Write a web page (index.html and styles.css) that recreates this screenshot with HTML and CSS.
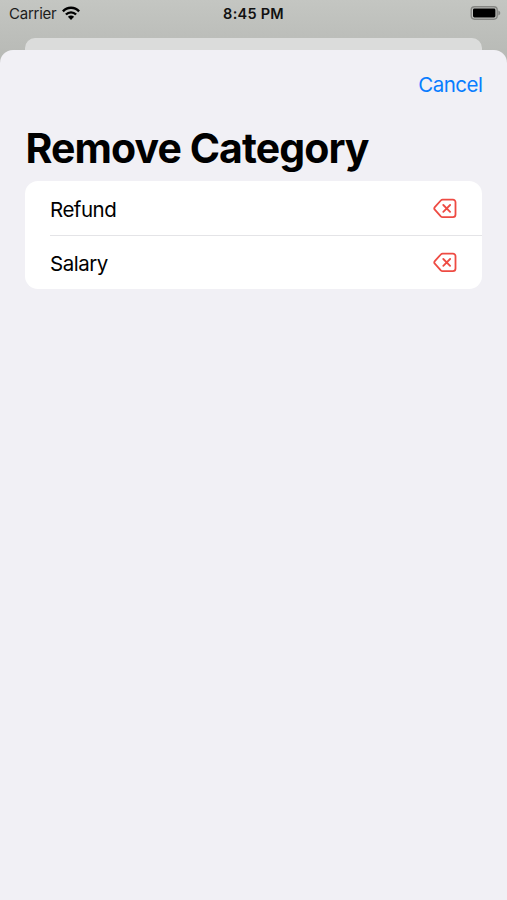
FILE: index.html
```html
<!DOCTYPE html>
<html lang="en">
<head>
<meta charset="utf-8">
<meta name="viewport" content="width=device-width">
<title>Remove Category</title>
<link rel="stylesheet" href="styles.css">
</head>
<body>
<header class="status">
  <div class="carrier"><span class="carrier-name">Carrier</span>
    <svg class="wifi" viewBox="0 0 18 14" width="18" height="14"><path d="M.9 5.300C5.400.6 12.600.6 17.100 5.300M3.900 8.500c2.900-2.900 7.300-2.900 10.200 0" fill="none" stroke="#000" stroke-width="2.400"/><path d="M5.900 10.700c1.800-1.700 4.400-1.700 6.200 0L9 13.900z"/></svg>
  </div>
  <span class="time">8:45 PM</span>
  <svg class="battery" viewBox="0 0 31 14" width="31" height="14"><rect x="1.200" y=".8" width="26" height="12.400" rx="3.400" fill="none" stroke="#858683" stroke-width="1.400"/><rect x="3" y="2.500" width="22.400" height="9" rx="1.400"/><path d="M28.300 4.500c2.600 1 2.600 4 0 5z" fill="#858683"/></svg>
</header>
<div class="behind"></div>
<main class="sheet">
  <nav class="nav"><a class="cancel">Cancel</a></nav>
  <h1 class="title">Remove Category</h1>
  <ul class="list">
    <li class="row"><span class="label">Refund</span><svg class="delete" viewBox="0 -.4 24 20" width="24" height="20"><path d="M9.700 1.300h10.200a2.600 2.600 0 0 1 2.600 2.600v12.200a2.600 2.600 0 0 1-2.600 2.600H9.700a2.600 2.600 0 0 1-1.900-.8L1.800 11.200a1.800 1.800 0 0 1 0-2.400l6-6.700a2.600 2.600 0 0 1 1.900-.8zM10.300 6.600l6.800 6.800m0-6.800l-6.800 6.800"/></svg></li>
    <li class="row"><span class="label">Salary</span><svg class="delete" viewBox="0 -.4 24 20" width="24" height="20"><path d="M9.700 1.300h10.200a2.600 2.600 0 0 1 2.600 2.600v12.200a2.600 2.600 0 0 1-2.600 2.600H9.700a2.600 2.600 0 0 1-1.900-.8L1.800 11.200a1.800 1.800 0 0 1 0-2.400l6-6.700a2.600 2.600 0 0 1 1.900-.8zM10.300 6.600l6.800 6.800m0-6.800l-6.800 6.800"/></svg></li>
  </ul>
</main>
</body>
</html>
```

FILE: styles.css
```css
* { box-sizing: border-box; }
body { margin: 0; height: 900px; display: flex; flex-direction: column; overflow: hidden; background: linear-gradient(#c4c6c2, #b7b9b5 60px); color: #000; font-family: Inter, sans-serif; }
.status { height: 38px; padding: 0 6px 0 9px; display: grid; grid-template-columns: 1fr auto 1fr; align-items: start; }
.carrier { display: flex; gap: 6px; }
.carrier-name { font-size: 15px; line-height: 28px; letter-spacing: -.25px; color: #1c1c1c; }
.wifi { margin-top: 6px; }
.time { font-size: 14.500px; font-weight: 600; line-height: 28px; letter-spacing: .25px; margin-right: 3px; color: #111; }
.battery { justify-self: end; margin-top: 6px; }
.behind { height: 12px; margin: 0 25px; border-radius: 10px 10px 0 0; background: #dbdcdb; }
.sheet { flex: 1; padding: 0 25px; border-radius: 13px 13px 0 0; background: #f1f0f5; }
.nav { height: 69px; display: flex; justify-content: flex-end; align-items: center; }
.cancel { color: #087dff; font-size: 20.500px; letter-spacing: -.5px; margin-right: -.5px; }
.title { margin: 0; height: 62.400px; font-size: 41px; line-height: 58px; font-weight: 700; letter-spacing: -.92px; text-indent: .5px; white-space: nowrap; }
.list { margin: 0; padding: 0; list-style: none; background: #fff; border-radius: 13px; }
.row { height: 54px; margin-left: 25px; padding-right: 25px; display: flex; align-items: center; justify-content: space-between; }
.row + .row { box-shadow: inset 0 1px #e4e4e7; }
.label { padding-top: 2px; font-size: 20.500px; letter-spacing: -.5px; }
.delete { fill: none; stroke: #ee4b43; stroke-width: 1.800; stroke-linecap: round; stroke-linejoin: round; }
```
